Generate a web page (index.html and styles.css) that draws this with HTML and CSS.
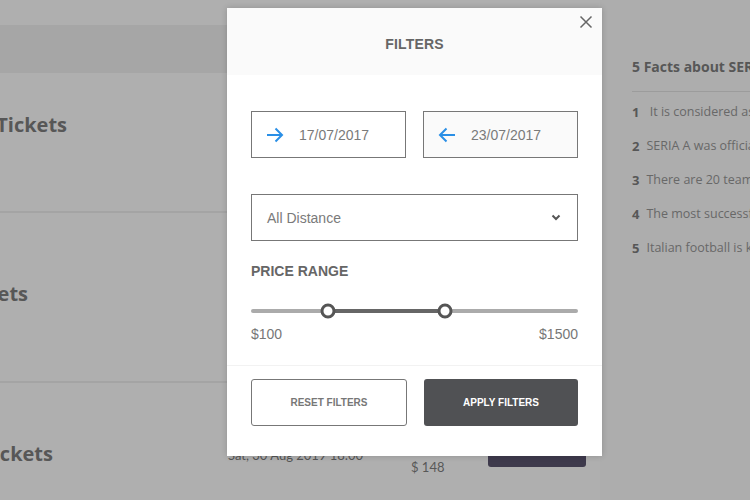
FILE: index.html
```html
<!DOCTYPE html>
<html>
<head>
<meta charset="utf-8">
<link rel="stylesheet" href="styles.css">
</head>
<body>
<div class="page">
  <div class="main">
    <div class="topstrip"></div>
    <div class="band"></div>
    <div class="row row-1">
      <div class="title-clip clip-1"><span class="title">Juventus vs Milan Tickets</span></div>
    </div>
    <div class="row row-2">
      <div class="title-clip clip-2"><span class="title">Roma vs Lazio Tickets</span></div>
    </div>
    <div class="row row-3">
      <div class="title-clip clip-3"><span class="title">Napoli vs Inter Tickets</span></div>
      <div class="row-meta">
        <span class="date">Sat, 30 Aug 2019 18:00</span>
        <span class="price">$ 148</span>
        <span class="buy"></span>
      </div>
    </div>
  </div>
  <aside class="side">
    <h3 class="side-title">5 Facts about SERIA A</h3>
    <ol class="facts">
      <li><b>1</b><span>&nbsp;It is considered as one of the best leagues</span></li>
      <li><b>2</b><span>SERIA A was officially founded in 1929</span></li>
      <li><b>3</b><span>There are 20 teams competing every season</span></li>
      <li><b>4</b><span>The most successful club is Juventus</span></li>
      <li><b>5</b><span>Italian football is known for its defence</span></li>
    </ol>
  </aside>
</div>

<div class="modal">
  <div class="modal-head">
    <span class="modal-title">FILTERS</span>
    <svg class="close" width="14" height="14" viewBox="0 0 14 14"><path d="M1.5 1.5 L12.5 12.5 M12.5 1.5 L1.5 12.5" stroke="#666" stroke-width="1.5" fill="none"/></svg>
  </div>
  <div class="modal-body">
    <div class="dates">
      <div class="field">
        <svg class="arrow" width="18" height="16" viewBox="0 0 18 16"><path d="M1 8 H16 M9.5 1.5 L16 8 L9.5 14.5" stroke="#2a8fe6" stroke-width="2" fill="none"/></svg>
        <span class="field-text">17/07/2017</span>
      </div>
      <div class="field field-alt">
        <svg class="arrow" width="18" height="16" viewBox="0 0 18 16"><path d="M17 8 H2 M8.5 1.5 L2 8 L8.5 14.5" stroke="#2a8fe6" stroke-width="2" fill="none"/></svg>
        <span class="field-text">23/07/2017</span>
      </div>
    </div>
    <div class="select">
      <span class="select-text">All Distance</span>
      <svg class="chev" width="10" height="7" viewBox="0 0 10 7"><path d="M1.5 1.5 L5 5 L8.5 1.5" stroke="#555" stroke-width="2" fill="none"/></svg>
    </div>
    <div class="label">PRICE RANGE</div>
    <div class="slider">
      <div class="track">
        <div class="fill" style="left:23.5%;width:35.8%"></div>
        <span class="knob" style="left:23.5%"></span>
        <span class="knob" style="left:59.3%"></span>
      </div>
      <div class="limits"><span>$100</span><span>$1500</span></div>
    </div>
  </div>
  <div class="modal-foot">
    <button class="btn btn-reset">RESET FILTERS</button>
    <button class="btn btn-apply">APPLY FILTERS</button>
  </div>
</div>
</body>
</html>
```
FILE: styles.css
```css
html, body {
  margin: 0;
  padding: 0;
  width: 750px;
  height: 500px;
  overflow: hidden;
  background: #adadad;
}

.page {
  display: flex;
  width: 750px;
  height: 500px;
  font-family: "Open Sans", sans-serif;
}

.main {
  width: 600px;
  flex: none;
  display: flex;
  flex-direction: column;
  background: #afafaf;
}

.topstrip {
  height: 25px;
  background: #afafaf;
}

.band {
  height: 48px;
  background: #a6a6a6;
}

.row {
  border-bottom: 2px solid #a4a4a4;
  position: relative;
  box-sizing: border-box;
}

.row-1 { height: 140px; padding-top: 38px; }
.row-2 { height: 170px; padding-top: 67px; }
.row-3 { flex: 1; padding-top: 57px; border-bottom: none; }

.title-clip {
  display: flex;
  justify-content: flex-end;
  overflow: hidden;
  white-space: nowrap;
}
.clip-1 { width: 67px; }
.clip-2 { width: 28px; }
.clip-3 { width: 53px; }

.title {
  font-weight: 700;
  font-size: 20px;
  line-height: 28px;
  color: #575757;
}

.row-meta {
  position: absolute;
  left: 228px;
  top: 37px;
  width: 360px;
  height: 60px;
}
.date {
  position: absolute;
  left: 0;
  top: 27px;
  font-family: Lato, sans-serif;
  font-size: 13px;
  line-height: 16px;
  color: #555;
  white-space: nowrap;
}
.price {
  position: absolute;
  left: 183px;
  top: 39px;
  font-family: Lato, sans-serif;
  font-size: 13px;
  line-height: 16px;
  color: #585858;
}
.buy {
  position: absolute;
  left: 260px;
  top: 0;
  width: 98px;
  height: 47px;
  background: #3e3a4c;
  border-radius: 3px;
}

.side {
  flex: 1;
  padding-left: 32px;
  padding-top: 56px;
  overflow: hidden;
  white-space: nowrap;
}

.side-title {
  margin: 0;
  font-size: 14px;
  line-height: 22px;
  font-weight: 700;
  color: #575757;
  padding-bottom: 13px;
  border-bottom: 1px solid #9c9c9c;
}

.facts {
  list-style: none;
  margin: 0;
  padding: 9px 0 0 0;
}
.facts li {
  display: flex;
  gap: 7px;
  height: 34px;
  font-size: 12.5px;
  line-height: 22px;
  color: #686868;
}
.facts b {
  font-weight: 700;
  color: #575757;
  font-size: 13px;
}

/* modal */
.modal {
  position: absolute;
  left: 227px;
  top: 8px;
  width: 375px;
  height: 448px;
  background: #fff;
  box-shadow: 0 0 6px rgba(0,0,0,0.18);
  font-family: "Liberation Sans", Arial, sans-serif;
  display: flex;
  flex-direction: column;
}

.modal-head {
  height: 67px;
  background: #fafafa;
  display: flex;
  align-items: center;
  justify-content: center;
  position: relative;
}
.modal-title {
  font-size: 14px;
  font-weight: 700;
  color: #666;
  letter-spacing: 0.2px;
  margin-top: 4px;
}
.close {
  position: absolute;
  right: 9px;
  top: 7px;
}

.modal-body {
  padding: 36px 24px 0 24px;
  border-bottom: 1px solid #f2f2f2;
  height: 291px;
  box-sizing: border-box;
}

.dates {
  display: flex;
  gap: 17px;
}
.field {
  flex: 1;
  height: 47px;
  box-sizing: border-box;
  border: 1px solid #777;
  display: flex;
  align-items: center;
  padding-left: 14px;
  gap: 15px;
}
.field-alt { background: #fafafa; }
.field-text {
  font-size: 14px;
  color: #7a7a7a;
}

.select {
  margin-top: 36px;
  height: 47px;
  box-sizing: border-box;
  border: 1px solid #777;
  display: flex;
  align-items: center;
  justify-content: space-between;
  padding: 0 16px 0 15px;
}
.select-text {
  font-size: 14px;
  color: #7a7a7a;
}

.label {
  margin-top: 22px;
  font-size: 14px;
  font-weight: 700;
  color: #666;
  line-height: 16px;
}

.slider {
  margin-top: 30px;
}
.track {
  position: relative;
  height: 4px;
  background: #ababab;
  border-radius: 2px;
}
.fill {
  position: absolute;
  top: 0;
  height: 4px;
  background: #666;
}
.knob {
  position: absolute;
  top: 2px;
  width: 15px;
  height: 15px;
  box-sizing: border-box;
  border: 3px solid #555;
  border-radius: 50%;
  background: #fff;
  transform: translate(-50%, -50%);
}

.limits {
  display: flex;
  justify-content: space-between;
  margin-top: 13px;
  font-size: 14px;
  color: #777;
  line-height: 16px;
}

.modal-foot {
  display: flex;
  gap: 17px;
  padding: 13px 24px 0 24px;
}
.btn {
  flex: 1;
  height: 47px;
  border-radius: 3px;
  font-family: "Liberation Sans", Arial, sans-serif;
  font-size: 10px;
  font-weight: 700;
  cursor: pointer;
}
.btn-reset {
  background: #fff;
  border: 1px solid #777;
  color: #777;
}
.btn-apply {
  background: #505154;
  border: none;
  color: #fff;
}
```
